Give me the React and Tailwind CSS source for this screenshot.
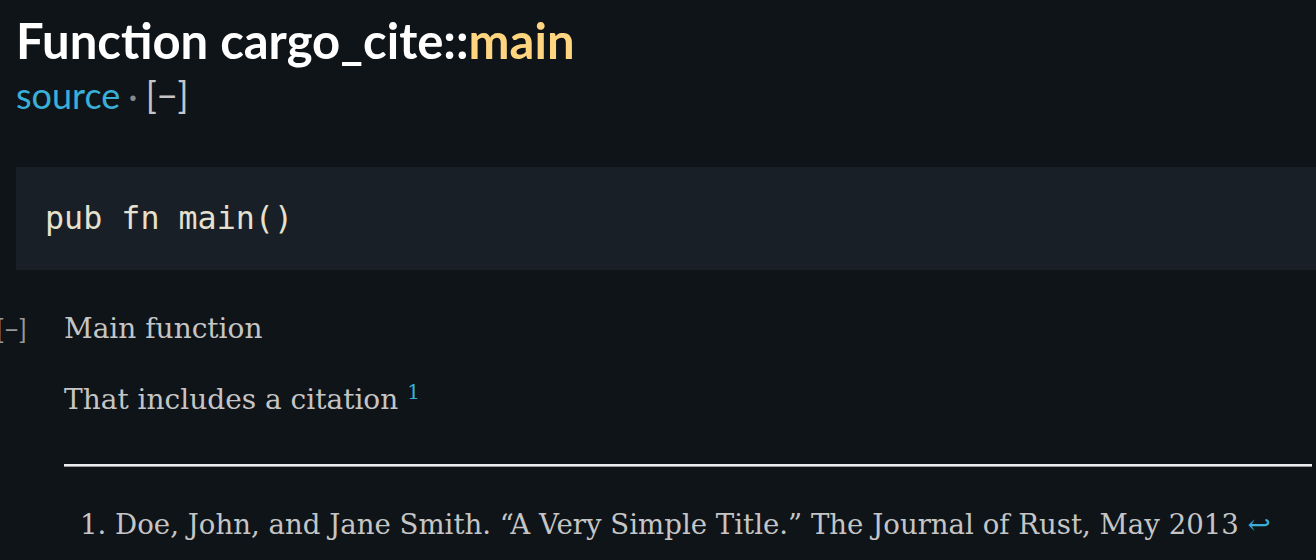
export default function App() {
  const serif = { fontFamily: '"DejaVu Serif", serif' };
  return (
    <div className="min-h-[560px] w-[1316px] overflow-hidden bg-[#0f1419] text-[#c5c5c5]">
      <div className="pl-4 pt-[12px]">
        <h1 className="font-['Lato',sans-serif] text-[49px] font-bold leading-[56px] text-white">
          Function cargo_cite::<span className="text-[#ffd580]">main</span>
        </h1>
        <div className="mt-[7px] flex items-center font-['Lato',sans-serif] text-[36px] leading-[40px]">
          <a className="text-[#39afd7]">source</a>
          <span className="mx-[8px] text-[#8a8a8a]">·</span>
          <span className="text-[#c5c5c5]">[−]</span>
        </div>
        <pre className="mt-[52px] flex h-[103px] items-center bg-[#191f26] pl-[29px] font-['DejaVu_Sans_Mono',monospace] text-[31.7px] text-[#e6e1cf]">
          pub fn main()
        </pre>
      </div>
      <div className="relative mt-[37px] pl-[64px]" style={serif}>
        <span className="absolute left-[-4px] top-[2px] font-['Lato',sans-serif] text-[26px] leading-[40px] text-[#999]">[−]</span>
        <p className="text-[28px] leading-[44px]">Main function</p>
        <p className="mt-[27px] text-[28px] leading-[44px]">
          That includes a citation <sup className="text-[20px] text-[#39afd7]">1</sup>
        </p>
        <hr className="mt-[42px] mr-[4px] h-[3px] border-0 border-t-2 border-b border-t-[#eee] border-b-[#999]" />
        <ol className="mt-[36px] pl-[16px] text-[27.6px] leading-[44px]">
          <li className="whitespace-nowrap">
            1. Doe, John, and Jane Smith. “A Very Simple Title.” The Journal of Rust, May 2013{' '}
            <span className="text-[#39afd7]">↩</span>
          </li>
        </ol>
      </div>
    </div>
  );
}
